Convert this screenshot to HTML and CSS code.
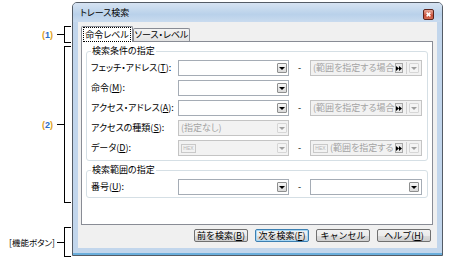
FILE: index.html
```html
<!DOCTYPE html>
<html lang="ja">
<head>
    <meta charset="UTF-8">
    <title>トレース検索</title>
    <link rel="stylesheet" href="styles.css">
</head>
<body>
<div class="page">
    <!-- callouts on the left -->
    <div class="notes">
        <div class="note note-tabs">
            <span class="note-label"><i>(</i>1<i>)</i></span>
            <span class="note-dash"></span>
            <span class="note-bracket"></span>
        </div>
        <div class="note note-panel">
            <span class="note-label"><i>(</i>2<i>)</i></span>
            <span class="note-dash"></span>
            <span class="note-bracket"></span>
        </div>
        <div class="note note-buttons">
            <span class="note-text">[機能ボタン]</span>
            <span class="note-dash"></span>
            <span class="note-bracket"></span>
        </div>
    </div>

    <!-- dialog -->
    <div class="window">
        <div class="titlebar">
            <span class="title">トレース検索</span>
            <span class="close-btn">
                <svg width="5" height="5" viewBox="0 0 5 5"><path d="M0.6 0.6L4.4 4.4M4.4 0.6L0.6 4.4" stroke="#fff" stroke-width="1.5"/></svg>
            </span>
        </div>
        <div class="client">
            <div class="tabs">
                <div class="tab tab-active"><span class="focus">命令レベル</span></div>
                <div class="tab">ソース・レベル</div>
            </div>
            <div class="panel">
                <div class="group group-cond">
                    <div class="group-title">検索条件の指定</div>
                    <div class="row">
                        <span class="row-label">フェッチ・アドレス(<u>T</u>):</span>
                        <div class="combo"><span class="combo-text"></span><span class="drop"></span></div>
                        <span class="dash">-</span>
                        <div class="combo combo-wide combo-off">
                            <span class="combo-text">(範囲を指定する場合</span>
                            <span class="ff"><svg width="6" height="5" viewBox="0 0 6 5"><path d="M0 0L3 2.5L0 5Z M3 0L6 2.5L3 5Z" fill="#000"/></svg></span>
                            <span class="sep"></span>
                            <span class="drop"></span>
                        </div>
                    </div>
                    <div class="row">
                        <span class="row-label">命令(<u>M</u>):</span>
                        <div class="combo"><span class="combo-text"></span><span class="drop"></span></div>
                    </div>
                    <div class="row">
                        <span class="row-label">アクセス・アドレス(<u>A</u>):</span>
                        <div class="combo"><span class="combo-text"></span><span class="drop"></span></div>
                        <span class="dash">-</span>
                        <div class="combo combo-wide combo-off">
                            <span class="combo-text">(範囲を指定する場合</span>
                            <span class="ff"><svg width="6" height="5" viewBox="0 0 6 5"><path d="M0 0L3 2.5L0 5Z M3 0L6 2.5L3 5Z" fill="#000"/></svg></span>
                            <span class="sep"></span>
                            <span class="drop"></span>
                        </div>
                    </div>
                    <div class="row">
                        <span class="row-label">アクセスの種類(<u>S</u>):</span>
                        <div class="combo combo-off"><span class="combo-text">(指定なし)</span><span class="drop"></span></div>
                    </div>
                    <div class="row">
                        <span class="row-label">データ(<u>D</u>):</span>
                        <div class="combo combo-off"><span class="hex">HEX</span><span class="combo-text"></span><span class="drop"></span></div>
                        <span class="dash">-</span>
                        <div class="combo combo-wide combo-off">
                            <span class="hex">HEX</span>
                            <span class="combo-text">(範囲を指定する</span>
                            <span class="ff"><svg width="6" height="5" viewBox="0 0 6 5"><path d="M0 0L3 2.5L0 5Z M3 0L6 2.5L3 5Z" fill="#000"/></svg></span>
                            <span class="sep"></span>
                            <span class="drop"></span>
                        </div>
                    </div>
                </div>

                <div class="group group-range">
                    <div class="group-title">検索範囲の指定</div>
                    <div class="row">
                        <span class="row-label">番号(<u>U</u>):</span>
                        <div class="combo"><span class="combo-text"></span><span class="drop"></span></div>
                        <span class="dash">-</span>
                        <div class="combo combo-wide"><span class="combo-text"></span><span class="drop"></span></div>
                    </div>
                </div>
            </div>

            <div class="buttons">
                <button class="btn">前を検索(<u>B</u>)</button>
                <button class="btn btn-default">次を検索(<u>F</u>)</button>
                <button class="btn">キャンセル</button>
                <button class="btn">ヘルプ(<u>H</u>)</button>
            </div>
        </div>
    </div>
</div>
</body>
</html>
```

FILE: styles.css
```css
body {
    margin: 0;
    font-family: "Noto Sans CJK JP", "Noto Sans", sans-serif;
    font-size: 9px;
    line-height: 12px;
    color: #000;
    background-color: #fff;
    font-feature-settings: "palt";
}
.page {
    display: flex;
    width: 474px;
    height: 260px;
}

/* callouts */
.notes {
    width: 72px;
    box-sizing: border-box;
    padding: 26px 1px 0 0;
    display: flex;
    flex-direction: column;
}
.note {
    display: flex;
    align-items: center;
    justify-content: flex-end;
}
.note-tabs {
    height: 17px;
}
.note-panel {
    height: 157px;
    margin-top: 3px;
}
.note-buttons {
    height: 30px;
    margin-top: 24px;
}
.note-label {
    margin-right: 4px;
    font-family: "Liberation Sans", sans-serif;
    font-weight: bold;
    font-size: 9px;
    color: #2a6cc8; /* blue number */
}
.note-label i {
    font-style: normal;
    color: #e0a020; /* orange brackets */
}
.note-text {
    margin-right: 2px;
    font-size: 8.5px;
}
.note-dash {
    width: 7px;
    height: 1px;
    background-color: #000;
}
.note-bracket {
    width: 7px;
    height: 100%;
    box-sizing: border-box;
    border: 1px solid #000;
    border-right: none;
}

/* dialog frame */
.window {
    width: 371px;
    height: 254px;
    margin-top: 2px;
    box-sizing: border-box;
    border: 1px solid #545c66;
    border-radius: 5px 5px 0 0;
    background-color: #c2d6ec;
    box-shadow: inset 0 -2px 0 #6aaedc;
    display: flex;
    flex-direction: column;
}
.titlebar {
    height: 19px;
    display: flex;
    padding: 0 8px 0 7px;
    border-radius: 4px 4px 0 0;
    background: linear-gradient(#d6e3f2, #b9d1ea 60%, #c9dbef);
}
.title {
    flex: 1;
    line-height: 19px;
}
.close-btn {
    width: 11px;
    height: 11px;
    margin-top: 6px;
    box-sizing: border-box;
    border: 1px solid #5c231c;
    border-radius: 2px;
    background: linear-gradient(#e8a697, #d0644f 50%, #c04531 51%, #d87055);
    display: flex;
    align-items: center;
    justify-content: center;
}
.client {
    flex: 1;
    margin: 0 5px 7px 5px;
    padding: 4px 4px 0 3px;
    background-color: #f0f0f0;
    display: flex;
    flex-direction: column;
}

/* tabs */
.tabs {
    height: 15px;
    display: flex;
    align-items: flex-end;
}
.tab {
    width: 57px;
    height: 13px;
    box-sizing: border-box;
    border: 1px solid #898c95;
    border-bottom: none;
    border-radius: 2px 2px 0 0;
    background: linear-gradient(#f4f4f4, #e3e3e3);
    text-align: center;
    line-height: 12px;
}
.tab-active {
    width: 52px;
    height: 16px;
    margin-bottom: -1px;
    padding-top: 2px;
    background: #fff;
    position: relative;
    z-index: 1;
}
.focus {
    border: 1px dotted #000;
    padding: 0 1px;
}
.panel {
    height: 184px;
    box-sizing: border-box;
    border: 1px solid #898c95;
    background-color: #fff;
    padding: 9px 4px 0 4px;
}

/* group boxes */
.group {
    border: 1px solid #d5dfe5;
    border-radius: 3px;
    padding: 0 4px 4px 4px;
    display: flex;
    flex-direction: column;
    gap: 4px;
}
.group-range {
    margin-top: 9px;
    padding-bottom: 2px;
}
.group-title {
    align-self: flex-start;
    margin: -7px 0 -1px 0;
    padding: 0 1px;
    background-color: #fff;
}
.row {
    height: 16px;
    display: flex;
    align-items: center;
}
.row-label {
    width: 87px;
    white-space: nowrap;
}

/* combo boxes */
.combo {
    width: 111px;
    height: 16px;
    box-sizing: border-box;
    border: 1px solid #a5acb5;
    background-color: #fff;
    padding: 0 1px 0 2px;
    display: flex;
    align-items: center;
}
.combo-wide {
    width: 112px;
}
.combo-text {
    flex: 1;
    overflow: hidden;
    white-space: nowrap;
}
.combo-off {
    background-color: #f2f2f2;
    border-color: #c4c4c4;
    color: #a3a3a3;
}
.drop {
    width: 10px;
    height: 10px;
    box-sizing: border-box;
    border: 1px solid #8e8f8f;
    border-radius: 1px;
    background: linear-gradient(#f6f6f6, #d9d9d9);
    display: flex;
    align-items: center;
    justify-content: center;
}
.drop::after {
    content: "";
    border-left: 3px solid transparent;
    border-right: 3px solid transparent;
    border-top: 3px solid #000;
}
.combo-off .drop {
    border-color: #d6d6d6;
    background: #f4f4f4;
}
.combo-off .drop::after {
    border-top-color: #9e9e9e;
}
.combo-wide .drop {
    margin-right: 1px;
}
.ff {
    width: 8px;
    height: 10px;
    box-sizing: border-box;
    border: 1px solid #a8a8a8;
    background-color: #e9e9e9;
    display: flex;
    align-items: center;
    justify-content: center;
}
.sep {
    width: 1px;
    height: 12px;
    margin: 0 2px 0 3px;
    background-color: #d0d0d0;
}
.hex {
    width: 15px;
    height: 9px;
    margin-right: 2px;
    box-sizing: border-box;
    border: 1px solid #c9c9c9;
    font-family: "Liberation Sans", sans-serif;
    font-size: 5px;
    line-height: 7px;
    text-align: center;
    color: #b4b4b4;
}
.dash {
    width: 21px;
    text-align: center;
}

/* bottom buttons */
.buttons {
    display: flex;
    justify-content: flex-end;
    gap: 7px;
    margin: 4px 2px 0 0;
}
.btn {
    width: 54px;
    height: 13px;
    box-sizing: border-box;
    padding: 0;
    border: 1px solid #707070;
    border-radius: 2px;
    background: linear-gradient(#f2f2f2, #ebebeb 50%, #dddddd 51%, #cfcfcf);
    font-family: inherit;
    font-size: 9px;
    line-height: 11px;
    color: #000;
}
.btn-default {
    border-color: #3c7fb1;
    box-shadow: inset 0 0 0 1px #a8d8f5;
}
```
